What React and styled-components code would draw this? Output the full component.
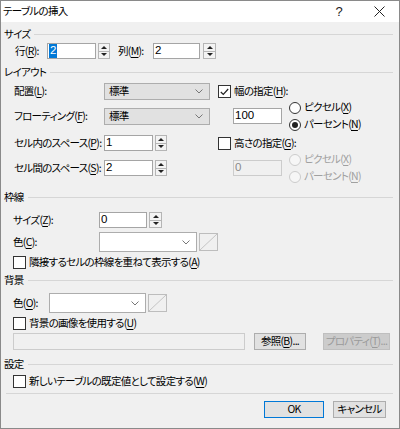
import React from 'react';
import styled, { createGlobalStyle } from 'styled-components';

const GlobalStyle = createGlobalStyle`
  html, body { margin: 0; padding: 0; background: #f0f0f0; }
  body {
    font-family: "Noto Sans CJK JP", "Noto Sans", sans-serif;
    font-size: 10.5px;
    letter-spacing: -0.7px;
    color: #000;
    font-feature-settings: "palt";
  }
  * { box-sizing: border-box; }
  u { text-decoration-thickness: 1px; text-underline-offset: 2px; }
`;

const Window = styled.div`
  width: 400px;
  height: 429px;
  border: 1px solid #8a8a8a;
  background: #f0f0f0;
  display: flex;
  flex-direction: column;
  overflow: hidden;
`;

const TitleBar = styled.div`
  height: 21px;
  flex-shrink: 0;
  background: #fff;
  display: flex;
  align-items: center;
  justify-content: space-between;
  padding-left: 2px;
`;

const Title = styled.div`
  font-size: 10.5px;
  line-height: 1;
`;

const TitleButtons = styled.div`
  display: flex;
  height: 100%;
`;

const TitleBtn = styled.div`
  width: 40px;
  height: 100%;
  display: flex;
  align-items: center;
  justify-content: center;
  font-family: "Liberation Sans", sans-serif;
  font-size: 13px;
  letter-spacing: 0;
  color: #222;
`;

const Body = styled.div`
  display: flex;
  flex-direction: column;
  padding: 0 6px 0 3px;
`;

const SectionHeader = styled.div`
  height: 14px;
  margin-top: ${p => p.$mt}px;
  display: flex;
  align-items: center;
  gap: 4px;
  line-height: 1;
`;

const Rule = styled.div`
  flex: 1;
  height: 1px;
  background: #d6d6d6;
`;

const Row = styled.div`
  display: flex;
  align-items: center;
  height: ${p => p.$h}px;
  margin-top: ${p => p.$mt || 0}px;
  padding-left: ${p => p.$pl || 0}px;
  gap: ${p => p.$gap || 0}px;
  line-height: 1;
  white-space: nowrap;
`;

const Label = styled.div`
  width: ${p => p.$w}px;
  margin-left: ${p => p.$ml || 0}px;
  flex-shrink: 0;
  white-space: nowrap;
  color: ${p => (p.$disabled ? '#a0a0a0' : '#000')};
`;

const TextBox = styled.div`
  width: ${p => p.$w}px;
  height: ${p => p.$h || 16}px;
  flex-shrink: 0;
  border: 1px solid ${p => (p.$disabled ? '#cccccc' : '#a5a5a5')};
  background: ${p => (p.$disabled ? '#f0f0f0' : '#fff')};
  color: ${p => (p.$disabled ? '#8a8a8a' : '#000')};
  display: flex;
  align-items: center;
  padding-left: 1px;
  font-family: "Liberation Sans", "Noto Sans CJK JP", sans-serif;
  font-size: 11.5px;
  letter-spacing: 0;
  line-height: 1;
`;

const Selected = styled.span`
  background: #0078d7;
  color: #fff;
  padding: 1px 1px;
`;

const Spinner = styled.div`
  width: ${p => p.$w || 12}px;
  height: 16px;
  margin-left: ${p => p.$ml || 2}px;
  flex-shrink: 0;
  border: 1px solid #b5b5b5;
  background: #f3f3f3;
  display: flex;
  flex-direction: column;
`;

const SpinHalf = styled.div`
  flex: 1;
  display: flex;
  align-items: center;
  justify-content: center;
  border-top: ${p => (p.$down ? '1px solid #b5b5b5' : 'none')};
`;

const Tri = styled.div`
  width: 0;
  height: 0;
  border-left: 3px solid transparent;
  border-right: 3px solid transparent;
  ${p => (p.$down ? 'border-top: 3px solid #222;' : 'border-bottom: 3px solid #222;')}
`;

const SelectBox = styled.div`
  width: ${p => p.$w}px;
  height: ${p => p.$h}px;
  flex-shrink: 0;
  border: 1px solid #adadad;
  background: ${p => (p.$white ? '#fff' : '#e1e1e1')};
  display: flex;
  align-items: center;
  justify-content: space-between;
  padding: 0 6px 0 4px;
`;

const Swatch = styled.div`
  width: 19px;
  height: 18px;
  margin-left: 2px;
  flex-shrink: 0;
  border: 1px solid #bdbdbd;
  background: #f0f0f0;
  display: flex;
`;

const Box = styled.div`
  width: 13px;
  height: 13px;
  flex-shrink: 0;
  border: 1px solid #333;
  background: #fff;
  display: flex;
  align-items: center;
  justify-content: center;
`;

const RadioGroup = styled.div`
  display: flex;
  flex-direction: column;
  gap: 4px;
  margin-left: ${p => p.$ml}px;
`;

const RadioItem = styled.div`
  height: 13px;
  display: flex;
  align-items: center;
  gap: 3px;
  line-height: 1;
  white-space: nowrap;
  color: ${p => (p.$disabled ? '#a0a0a0' : '#000')};
`;

const Circle = styled.div`
  width: 12px;
  height: 12px;
  border-radius: 50%;
  border: 1px solid ${p => (p.$disabled ? '#cccccc' : '#333')};
  background: ${p => (p.$disabled ? '#f6f6f6' : '#fff')};
  display: flex;
  align-items: center;
  justify-content: center;
  &::after {
    content: '';
    display: ${p => (p.$checked ? 'block' : 'none')};
    width: 6px;
    height: 6px;
    border-radius: 50%;
    background: #222;
  }
`;

const Columns = styled.div`
  display: flex;
`;

const LeftCol = styled.div`
  width: 214px;
  padding-left: 10px;
  display: flex;
  flex-direction: column;
`;

const RightCol = styled.div`
  display: flex;
  flex-direction: column;
`;

const Button = styled.div`
  width: ${p => p.$w}px;
  height: 17px;
  flex-shrink: 0;
  margin-left: ${p => p.$ml || 0}px;
  border: 1px solid ${p => (p.$default ? '#0078d7' : p.$disabled ? '#bfbfbf' : '#adadad')};
  background: ${p => (p.$disabled ? '#cccccc' : '#e1e1e1')};
  color: ${p => (p.$disabled ? '#9a9a9a' : '#000')};
  display: flex;
  align-items: center;
  justify-content: center;
  line-height: 1;
  white-space: nowrap;
`;

const Separator = styled.div`
  height: 1px;
  margin: 5px 0 0 2px;
  background: #d6d6d6;
`;

const Footer = styled.div`
  display: flex;
  justify-content: flex-end;
  gap: 9px;
  margin-top: 7px;
  padding-right: 7px;
`;

const Chevron = () => (
  <svg width="8" height="5" viewBox="0 0 8 5">
    <path d="M0.5 0.5 L4 4 L7.5 0.5" fill="none" stroke="#777" strokeWidth="1" />
  </svg>
);

const Spin = ({ ml, w }) => (
  <Spinner $ml={ml} $w={w}>
    <SpinHalf><Tri /></SpinHalf>
    <SpinHalf $down><Tri $down /></SpinHalf>
  </Spinner>
);

const Check = ({ checked }) => (
  <Box>
    {checked && (
      <svg width="9" height="8" viewBox="0 0 9 8">
        <path d="M0.8 4 L3.3 6.5 L8.2 1" fill="none" stroke="#222" strokeWidth="1.2" />
      </svg>
    )}
  </Box>
);

const SwatchBox = () => (
  <Swatch>
    <svg width="17" height="16" viewBox="0 0 17 16">
      <path d="M0 16 L17 0" stroke="#c4c4c4" strokeWidth="1" />
    </svg>
  </Swatch>
);

const Radio = ({ checked, disabled, children }) => (
  <RadioItem $disabled={disabled}>
    <Circle $checked={checked} $disabled={disabled} />
    <span>{children}</span>
  </RadioItem>
);

export default function App() {
  return (
    <>
      <GlobalStyle />
      <Window>
        <TitleBar>
          <Title>テーブルの挿入</Title>
          <TitleButtons>
            <TitleBtn>?</TitleBtn>
            <TitleBtn>
              <svg width="11" height="11" viewBox="0 0 11 11">
                <path d="M0.5 0.5 L10.5 10.5 M10.5 0.5 L0.5 10.5" stroke="#222" strokeWidth="1" />
              </svg>
            </TitleBtn>
          </TitleButtons>
        </TitleBar>
        <Body>
          <SectionHeader $mt={5}>
            <span>サイズ</span>
            <Rule />
          </SectionHeader>
          <Row $h={16} $mt={2} $pl={11}>
            <Label $w={32}>行(<u>R</u>):</Label>
            <TextBox $w={49}><Selected>2</Selected></TextBox>
            <Spin />
            <Label $w={35} $ml={8}>列(<u>M</u>):</Label>
            <TextBox $w={47}>2</TextBox>
            <Spin ml={3} w={13} />
          </Row>

          <SectionHeader $mt={6}>
            <span>レイアウト</span>
            <Rule />
          </SectionHeader>
          <Columns>
            <LeftCol>
              <Row $h={17} $mt={4}>
                <Label $w={90}>配置(<u>L</u>):</Label>
                <SelectBox $w={106} $h={17}>
                  <span>標準</span>
                  <Chevron />
                </SelectBox>
              </Row>
              <Row $h={17} $mt={8}>
                <Label $w={90}>フローティング(<u>F</u>):</Label>
                <SelectBox $w={106} $h={17}>
                  <span>標準</span>
                  <Chevron />
                </SelectBox>
              </Row>
              <Row $h={16} $mt={10}>
                <Label $w={90}>セル内のスペース(<u>P</u>):</Label>
                <TextBox $w={49}>1</TextBox>
                <Spin />
              </Row>
              <Row $h={16} $mt={9}>
                <Label $w={90}>セル間のスペース(<u>S</u>):</Label>
                <TextBox $w={49}>2</TextBox>
                <Spin />
              </Row>
            </LeftCol>
            <RightCol>
              <Row $h={13} $mt={6} $gap={3}>
                <Check checked />
                <span>幅の指定(<u>H</u>):</span>
              </Row>
              <Row $h={30} $mt={3} $pl={15}>
                <TextBox $w={49}>100</TextBox>
                <RadioGroup $ml={7}>
                  <Radio>ピクセル(<u>X</u>)</Radio>
                  <Radio checked>パーセント(<u>N</u>)</Radio>
                </RadioGroup>
              </Row>
              <Row $h={13} $mt={6} $gap={3}>
                <Check />
                <span>高さの指定(<u>G</u>):</span>
              </Row>
              <Row $h={30} $mt={3} $pl={15}>
                <TextBox $w={49} $disabled>0</TextBox>
                <RadioGroup $ml={7}>
                  <Radio disabled>ピクセル(<u>X</u>)</Radio>
                  <Radio disabled>パーセント(<u>N</u>)</Radio>
                </RadioGroup>
              </Row>
            </RightCol>
          </Columns>

          <SectionHeader $mt={7}>
            <span>枠線</span>
            <Rule />
          </SectionHeader>
          <Row $h={16} $mt={8} $pl={9}>
            <Label $w={86}>サイズ(<u>Z</u>):</Label>
            <TextBox $w={48}>0</TextBox>
            <Spin ml={2} w={13} />
          </Row>
          <Row $h={20} $mt={4} $pl={9}>
            <Label $w={86}>色(<u>C</u>):</Label>
            <SelectBox $w={98} $h={20} $white>
              <span />
              <Chevron />
            </SelectBox>
            <SwatchBox />
          </Row>
          <Row $h={13} $mt={4} $pl={9} $gap={3}>
            <Check />
            <span>隣接するセルの枠線を重ねて表示する(<u>A</u>)</span>
          </Row>

          <SectionHeader $mt={4}>
            <span>背景</span>
            <Rule />
          </SectionHeader>
          <Row $h={20} $mt={6} $pl={9}>
            <Label $w={36}>色(<u>O</u>):</Label>
            <SelectBox $w={97} $h={20} $white>
              <span />
              <Chevron />
            </SelectBox>
            <SwatchBox />
          </Row>
          <Row $h={13} $mt={4} $pl={9} $gap={3}>
            <Check />
            <span>背景の画像を使用する(<u>U</u>)</span>
          </Row>
          <Row $h={17} $mt={3} $pl={9}>
            <TextBox $w={232} $h={17} $disabled />
            <Button $w={52} $ml={9}>参照(<u>B</u>)...</Button>
            <Button $w={67} $ml={17} $disabled>プロパティ(<u>T</u>)...</Button>
          </Row>

          <SectionHeader $mt={7}>
            <span>設定</span>
            <Rule />
          </SectionHeader>
          <Row $h={13} $mt={4} $pl={9} $gap={3}>
            <Check />
            <span>新しいテーブルの既定値として設定する(<u>W</u>)</span>
          </Row>
          <Separator />
          <Footer>
            <Button $w={60} $default>OK</Button>
            <Button $w={53}>キャンセル</Button>
          </Footer>
        </Body>
      </Window>
    </>
  );
}
